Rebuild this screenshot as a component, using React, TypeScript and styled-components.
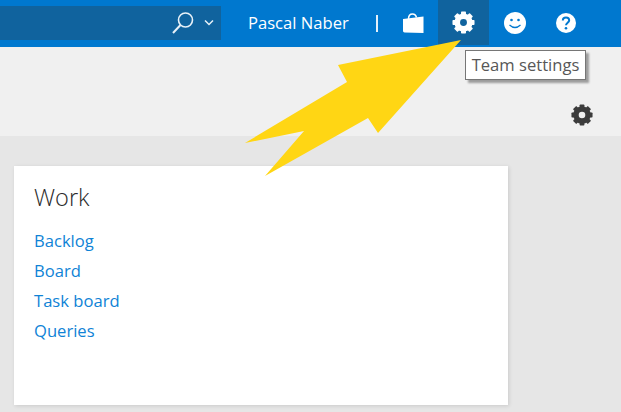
import React from "react";
import styled, { createGlobalStyle } from "styled-components";

const GlobalStyle = createGlobalStyle`
  html, body {
    margin: 0;
    padding: 0;
    background: #e6e6e6;
  }
  body {
    font-family: "Open Sans", "Liberation Sans", sans-serif;
    overflow: hidden;
  }
`;

const Page = styled.div`
  position: relative;
  width: 621px;
  height: 412px;
  overflow: hidden;
  display: flex;
  flex-direction: column;
`;

const TopBar = styled.header`
  height: 47px;
  flex: none;
  display: flex;
  align-items: flex-start;
  background: #0078cf;
  color: #fff;
`;

const SearchBox = styled.div`
  width: 221px;
  height: 34px;
  margin-top: 6px;
  flex: none;
  display: flex;
  align-items: center;
  justify-content: flex-end;
  gap: 9px;
  padding-right: 7px;
  box-sizing: border-box;
  background: #10639e;
`;

const UserName = styled.span`
  margin-left: 27px;
  width: 102px;
  line-height: 46px;
  font-size: 16.6px;
  white-space: nowrap;
`;

const Divider = styled.span`
  width: 2px;
  height: 17px;
  margin: 15px 9px 0 26px;
  background: #e4f0fa;
`;

const NavCell = styled.div<{ $active?: boolean }>`
  width: 51px;
  height: 45px;
  flex: none;
  display: flex;
  align-items: center;
  justify-content: center;
  background: ${({ $active }) => ($active ? "#10639e" : "transparent")};
`;

const Toolbar = styled.div`
  height: 89px;
  flex: none;
  display: flex;
  align-items: flex-end;
  justify-content: flex-end;
  padding: 0 28px 10px 0;
  box-sizing: border-box;
  background: #f0f0f0;
`;

const Content = styled.main`
  flex: 1;
  padding: 30px 0 7px 14px;
  display: flex;
  min-height: 0;
`;

const Card = styled.section`
  width: 494px;
  padding: 14px 20px;
  box-sizing: border-box;
  background: #fff;
  box-shadow: 1px 1px 4px rgba(0, 0, 0, 0.12);
`;

const CardTitle = styled.h2`
  margin: 0 0 12px;
  font-size: 23.6px;
  line-height: 34px;
  font-weight: 300;
  color: #2b2b2b;
`;

const LinkList = styled.ul`
  margin: 0;
  padding: 0;
  list-style: none;
`;

const LinkItem = styled.li`
  height: 30px;
  line-height: 30px;
  font-size: 16.6px;
  color: #0f83d6;
`;

const Tooltip = styled.div`
  position: absolute;
  left: 465px;
  top: 50px;
  width: 121px;
  height: 30px;
  box-sizing: border-box;
  text-align: center;
  line-height: 28px;
  font-size: 16.6px;
  color: #575757;
  white-space: nowrap;
  background: #fff;
  border: 1px solid #767676;
  box-shadow: 3px 3px 2px rgba(0, 0, 0, 0.35);
`;

const ArrowSvg = styled.svg`
  position: absolute;
  left: 0;
  top: 0;
  pointer-events: none;
`;

const teeth = [0, 45, 90, 135, 180, 225, 270, 315];

const Gear = ({ color, size, hole }: { color: string; size: number; hole: number }) => (
  <svg width={size} height={size} viewBox="0 0 24 24">
    <circle cx="12" cy="12" r={(hole + 9.5) / 2} fill="none" stroke={color} strokeWidth={9.5 - hole} />
    {teeth.map((a) => (
      <rect key={a} x="9.4" y="0.5" width="5.2" height="5" rx="0.8" fill={color} transform={`rotate(${a} 12 12)`} />
    ))}
  </svg>
);

const SearchIcon = () => (
  <svg width="24" height="24" viewBox="0 0 24 24" fill="none" stroke="#e8f1f8" strokeWidth="1.6">
    <circle cx="14.5" cy="9" r="7" />
    <path d="M9.5 14 2 22" strokeWidth="2" />
  </svg>
);

const Chevron = () => (
  <svg width="10" height="8" viewBox="0 0 10 8" fill="none" stroke="#e8f1f8" strokeWidth="1.5">
    <path d="M1 1.5 5 5.5 9 1.5" />
  </svg>
);

const BagIcon = () => (
  <svg width="22" height="22" viewBox="0 0 22 22">
    <path d="M6.5 7C6.500 3.500 8.500 2 10.500 2s3.500 1.500 4 3.500" fill="none" stroke="#fff" strokeWidth="1.5" />
    <path d="M1 7 21.500 4.500 21.500 21 2.500 20.500Q1 20.400 1 19Z" fill="#fff" />
  </svg>
);

const SmileIcon = () => (
  <svg width="22" height="22" viewBox="0 0 22 22">
    <circle cx="11" cy="11" r="11" fill="#fff" />
    <circle cx="7.500" cy="8" r="1.300" fill="#0078cf" />
    <circle cx="14.500" cy="8" r="1.300" fill="#0078cf" />
    <path d="M5.500 13q5.500 5 11 0" fill="none" stroke="#0078cf" strokeWidth="1.300" />
  </svg>
);

const HelpIcon = () => (
  <svg width="20" height="20" viewBox="0 0 20 20">
    <circle cx="10" cy="10" r="10" fill="#fff" />
    <path d="M6.800 7.500C6.800 5.500 8.300 4.500 10 4.500s3.200 1 3.200 2.800c0 2.400-3.200 2.500-3.200 5" fill="none" stroke="#0078cf" strokeWidth="2" />
    <circle cx="10" cy="15.200" r="1.300" fill="#0078cf" />
  </svg>
);

const links = ["Backlog", "Board", "Task board", "Queries"];

export default function App() {
  return (
    <Page>
      <GlobalStyle />
      <TopBar>
        <SearchBox>
          <SearchIcon />
          <Chevron />
        </SearchBox>
        <UserName>Pascal Naber</UserName>
        <Divider />
        <NavCell>
          <BagIcon />
        </NavCell>
        <NavCell $active>
          <Gear color="#fff" size={23} hole={3.6} />
        </NavCell>
        <NavCell>
          <SmileIcon />
        </NavCell>
        <NavCell>
          <HelpIcon />
        </NavCell>
      </TopBar>
      <Toolbar>
        <Gear color="#3c3c3c" size={22} hole={3.6} />
      </Toolbar>
      <Content>
        <Card>
          <CardTitle>Work</CardTitle>
          <LinkList>
            {links.map((l) => (
              <LinkItem key={l}>{l}</LinkItem>
            ))}
          </LinkList>
        </Card>
      </Content>
      <ArrowSvg width="621" height="412" viewBox="0 0 621 412">
        <polygon points="461,40 338,65 347,82 245,143 304,131 265,176 368,118 378,133" fill="#ffd614" />
      </ArrowSvg>
      <Tooltip>Team settings</Tooltip>
    </Page>
  );
}
